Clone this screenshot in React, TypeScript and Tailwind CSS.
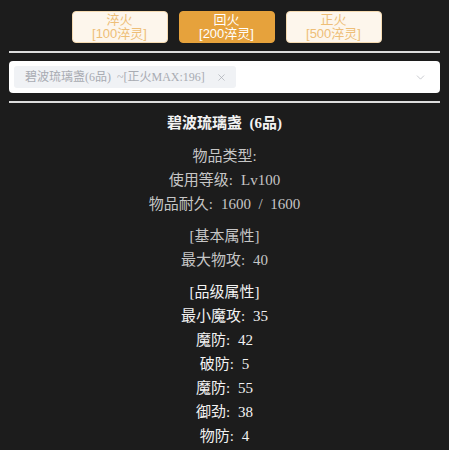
import { X, ChevronDown } from 'lucide-react'

const fires = [
  { name: '淬火', cost: '[100淬灵]', active: false },
  { name: '回火', cost: '[200淬灵]', active: true },
  { name: '正火', cost: '[500淬灵]', active: false },
]

const serif = 'font-["Liberation_Serif","Noto_Sans_CJK_SC",serif]'

function Row({ label, value }: { label: string; value?: string }) {
  return (
    <div>
      <span>{label}:</span>
      {value && <span className="ml-[8px]">{value}</span>}
    </div>
  )
}

export default function App() {
  return (
    <div className={`min-h-[450px] w-[449px] bg-[#1c1c1c] ${serif}`}>
      {/* Fire buttons */}
      <div className="flex justify-center gap-[11px] pt-[11px] pl-[4px]">
        {fires.map((f) => (
          <button
            key={f.name}
            className={`flex h-[32px] w-[96px] flex-col items-center justify-center rounded-[4px] border text-[13px] leading-[14px] ${
              f.active
                ? 'border-[#e6a23c] bg-[#e6a23c] text-white'
                : 'border-[#f5dab1] bg-[#fdf6ec] text-[#eebe77]'
            } font-["Liberation_Sans","Noto_Sans_CJK_SC",sans-serif]`}
          >
            <span>{f.name}</span>
            <span>{f.cost}</span>
          </button>
        ))}
      </div>

      <div className="mx-[9px] mt-[8px] h-[2px] bg-[#dcdcdc]" />

      {/* Select */}
      <div className="mx-[9px] mt-[8px] flex h-[32px] items-center rounded-[4px] bg-white pl-[5px] pr-[13px]">
        <div className="flex h-[22px] items-center gap-[11px] rounded-[3px] bg-[#f0f2f5] pl-[11px] pr-[9px] text-[12px] text-[#a8abb2]">
          <span className="font-['Liberation_Serif','Noto_Sans_CJK_SC',serif] [word-spacing:3px]">碧波琉璃盏(6品) ~[正火MAX:196]</span>
          <X className="h-[11px] w-[11px]" strokeWidth={1.5} />
        </div>
        <div className="flex-1" />
        <ChevronDown className="h-[13px] w-[13px] text-[#b4b7bd]" strokeWidth={1.3} />
      </div>

      <div className="mx-[9px] mt-[8px] h-[2px] bg-[#dcdcdc]" />

      {/* Item info */}
      <div className="flex flex-col items-center pt-[8px] text-[15px] leading-[24px] [word-spacing:3.75px]">
        <div className="mb-[1px] font-bold text-[#f2f2f2]">碧波琉璃盏 (6品)</div>
        <div className="mt-[8px] flex flex-col items-center text-[#c6c6c6]">
          <Row label="物品类型" />
          <Row label="使用等级" value="Lv100" />
          <Row label="物品耐久" value="1600 / 1600" />
        </div>
        <div className="mt-[8px] flex flex-col items-center text-[#c6c6c6]">
          <div>[基本属性]</div>
          <Row label="最大物攻" value="40" />
        </div>
        <div className="mt-[8px] flex flex-col items-center text-[#f2f2f2]">
          <div>[品级属性]</div>
          <Row label="最小魔攻" value="35" />
          <Row label="魔防" value="42" />
          <Row label="破防" value="5" />
          <Row label="魔防" value="55" />
          <Row label="御劲" value="38" />
          <Row label="物防" value="4" />
        </div>
      </div>
    </div>
  )
}
